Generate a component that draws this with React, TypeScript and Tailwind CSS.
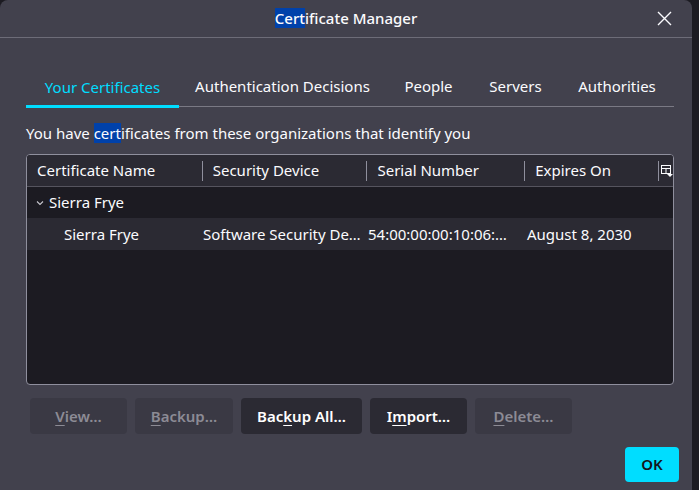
import React from "react";

const font = { fontFamily: '"Noto Sans", "Open Sans", sans-serif' };

const tabs = [
  { t: "Your Certificates", w: "w-[153px]" },
  { t: "Authentication Decisions", w: "w-[207px]" },
  { t: "People", w: "w-[85px]" },
  { t: "Servers", w: "w-[89px]" },
  { t: "Authorities", w: "w-[114px]" },
];

function Btn({ ul, rest, pre = "", enabled, w }: { pre?: string; ul: string; rest: string; enabled?: boolean; w: string }) {
  return (
    <button
      className={`${w} h-9 rounded-[4px] text-[15px] font-semibold flex items-center justify-center whitespace-nowrap ${
        enabled ? "bg-[#2b2a33] text-white" : "bg-[#3a3944] text-[#8c8b95]"
      }`}
    >
      {pre}
      <span className="underline underline-offset-[3px]">{ul}</span>
      {rest}
    </button>
  );
}

export default function App() {
  return (
    <div className="w-[699px] h-[490px] bg-[#1c1b22] overflow-hidden" style={font}>
      <div className="w-[692px] h-[490px] bg-[#42414d] rounded-t-[8px] flex flex-col text-[#fbfbfe]">
        {/* Title bar */}
        <div className="h-[38px] border-b border-[#6d6c78] flex items-center justify-center relative shrink-0">
          <span className="text-[15px] font-medium">
            <span className="bg-[#0041aa]">Cert</span>ificate Manager
          </span>
          <svg className="absolute right-[20px] top-[11px]" width="15" height="15" viewBox="0 0 15 15">
            <path d="M1 1 L14 14 M14 1 L1 14" stroke="#fbfbfe" strokeWidth="1.4" />
          </svg>
        </div>

        {/* Tabs */}
        <div className="mt-[30px] ml-[26px] w-[648px] flex border-b border-[#7a7984] h-[39px] shrink-0">
          {tabs.map((tab, i) => (
            <div
              key={tab.t}
              className={`${tab.w} flex items-center justify-center text-[15px] whitespace-nowrap ${
                i === 0 ? "text-[#00ddff] border-b-[3px] border-[#00ddff] -mb-[2px] pt-[1px]" : "pb-[2px]"
              }`}
            >
              {tab.t}
            </div>
          ))}
        </div>

        <div className="mx-[26px] mt-[16px] text-[15px] leading-[20px] whitespace-nowrap">
          You have <span className="bg-[#0041aa]">cert</span>ificates from these organizations that identify you
        </div>

        {/* Tree */}
        <div className="mt-[11px] ml-[26px] w-[648px] h-[231px] border border-[#8f8f9d] rounded-[4px] bg-[#1c1b22] overflow-hidden flex flex-col text-[15px]">
          <div className="h-[32px] bg-[#2b2a33] border-b border-[#55545e] flex items-center shrink-0">
            <div className="w-[175px] pl-[10px]">Certificate Name</div>
            <div className="w-[165px] pl-[10px] border-l border-[#8f8f9d] h-[20px] flex items-center">Security Device</div>
            <div className="w-[158px] pl-[10px] border-l border-[#8f8f9d] h-[20px] flex items-center">Serial Number</div>
            <div className="w-[134px] pl-[10px] border-l border-[#8f8f9d] h-[20px] flex items-center">Expires On</div>
            <div className="flex-1 border-l border-[#8f8f9d] h-[20px] flex items-center pl-[2px]">
              <svg width="12" height="12" viewBox="0 0 12 12">
                <rect x="0.5" y="0.5" width="9" height="8" fill="none" stroke="#fbfbfe" strokeWidth="1" />
                <path d="M0.5 3.5 H9.5 M5 3.5 V8.5" stroke="#fbfbfe" strokeWidth="1" />
                <path d="M6 9 H12 L9 12 Z" fill="#fbfbfe" />
              </svg>
            </div>
          </div>
          <div className="h-[32px] flex items-center pl-[8px] -mt-[1px]">
            <svg width="10" height="10" viewBox="0 0 10 10" className="mr-[4px] mt-[2px]">
              <path d="M2 3.5 L5 6.5 L8 3.5" stroke="#c8c8d0" strokeWidth="1.1" fill="none" />
            </svg>
            Sierra Frye
          </div>
          <div className="h-[32px] bg-[#2b2a33] flex items-center whitespace-nowrap">
            <div className="w-[176px] pl-[37px]">Sierra Frye</div>
            <div className="w-[165px] truncate pr-[4px]">Software Security Device</div>
            <div className="w-[158px] truncate pr-[18px]">54:00:00:00:10:06:3F:A2</div>
            <div className="pl-[1px]">August 8, 2030</div>
          </div>
        </div>

        {/* Buttons */}
        <div className="ml-[30px] mt-[13px] flex gap-[8px]">
          <Btn w="w-[97px]" ul="V" rest="iew…" />
          <Btn w="w-[98px]" ul="B" rest="ackup…" />
          <Btn w="w-[121px]" enabled pre="Bac" ul="k" rest="up All…" />
          <Btn w="w-[97px]" enabled pre="I" ul="m" rest="port…" />
          <Btn w="w-[97px]" ul="D" rest="elete…" />
        </div>

        <div className="flex justify-end mr-[13px] mt-[13px]">
          <button className="w-[54px] h-[35px] rounded-[4px] bg-[#00ddff] text-[#15141a] text-[15px] font-semibold">OK</button>
        </div>
      </div>
    </div>
  );
}
